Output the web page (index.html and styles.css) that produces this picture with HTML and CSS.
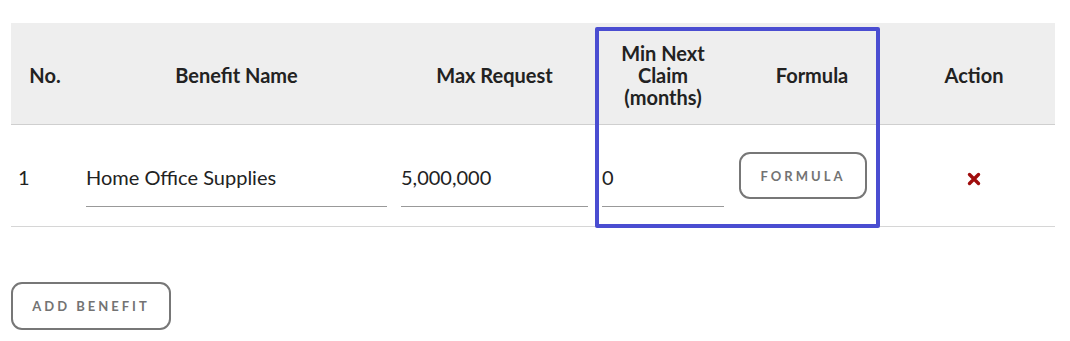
FILE: index.html
```html
<!DOCTYPE html>
<html lang="en">
<head>
    <meta charset="UTF-8">
    <title>Benefits</title>
    <link rel="stylesheet" href="styles.css">
</head>
<body>
    <div class="container">
        <div class="table-wrap">
            <table class="benefit-table">
                <colgroup>
                    <col class="col-no">
                    <col class="col-name">
                    <col class="col-max">
                    <col class="col-min">
                    <col class="col-formula">
                    <col class="col-action">
                </colgroup>
                <thead>
                    <tr>
                        <th>No.</th>
                        <th>Benefit Name</th>
                        <th>Max Request</th>
                        <th>Min Next<br>Claim<br>(months)</th>
                        <th>Formula</th>
                        <th>Action</th>
                    </tr>
                </thead>
                <tbody>
                    <tr>
                        <td class="cell-no">1</td>
                        <td><input class="line-input" type="text" value="Home Office Supplies"></td>
                        <td><input class="line-input" type="text" value="5,000,000"></td>
                        <td><input class="line-input" type="text" value="0"></td>
                        <td><button class="outline-btn formula-btn">Formula</button></td>
                        <td class="cell-action">
                            <svg class="remove-icon" width="14" height="14" viewBox="0 0 14 14">
                                <path d="M2.5 2.5 L11.5 11.5 M11.5 2.5 L2.5 11.5" stroke="#a00d0d" stroke-width="3.4" stroke-linecap="round"/>
                            </svg>
                        </td>
                    </tr>
                </tbody>
            </table>
            <div class="highlight-box"></div>
        </div>

        <button class="outline-btn add-btn">Add Benefit</button>
    </div>
</body>
</html>
```

FILE: styles.css
```css
body {
    margin: 0;
    font-family: Lato, "Open Sans", sans-serif;
    color: #222;
    background: #fff;
}
.container {
    padding: 23px 15px 0 11px;
}
.table-wrap {
    position: relative;
}
.benefit-table {
    width: 1044px;
    border-collapse: collapse;
    table-layout: fixed;
}
.col-no { width: 68px; }
.col-name { width: 315px; }
.col-max { width: 201px; }
.col-min { width: 136px; }
.col-formula { width: 162px; }
.col-action { width: 162px; }

.benefit-table th {
    background: #eeeeee;
    height: 101px;
    padding: 3px 7px 0;
    font-size: 20px;
    font-weight: 700;
    line-height: 22px;
    text-align: center;
    vertical-align: middle;
    border-bottom: 1px solid #cfcfcf;
    box-sizing: border-box;
}
.benefit-table td {
    height: 102px;
    padding: 3px 7px 0;
    font-size: 20px;
    vertical-align: middle;
    border-bottom: 1px solid #d6d6d6;
    box-sizing: border-box;
}
.cell-no {
    padding-left: 8px;
}
.line-input {
    display: block;
    width: 100%;
    height: 58px;
    margin-top: 2px;
    box-sizing: border-box;
    border: none;
    border-bottom: 1px solid #999;
    padding: 0;
    font-family: Lato, "Open Sans", sans-serif;
    font-size: 20px;
    color: #222;
    background: transparent;
    outline: none;
}
.cell-action {
    text-align: center;
}
.remove-icon {
    display: inline-block;
    vertical-align: middle;
}
.outline-btn {
    background: #fff;
    border: 2px solid #777;
    border-radius: 11px;
    color: #737373;
    font-family: Lato, "Open Sans", sans-serif;
    font-weight: 700;
    font-size: 13px;
    letter-spacing: 3px;
    text-transform: uppercase;
    cursor: pointer;
}
.formula-btn {
    display: block;
    width: 128px;
    height: 47px;
    margin-left: 1px;
    margin-bottom: 2px;
}
.add-btn {
    margin-top: 55px;
    width: 160px;
    height: 48px;
}
.highlight-box {
    position: absolute;
    left: 584px;
    top: 4px;
    width: 285px;
    height: 201px;
    box-sizing: border-box;
    border: 4px solid #4a4dd1;
    border-radius: 2px;
    pointer-events: none;
}
```
